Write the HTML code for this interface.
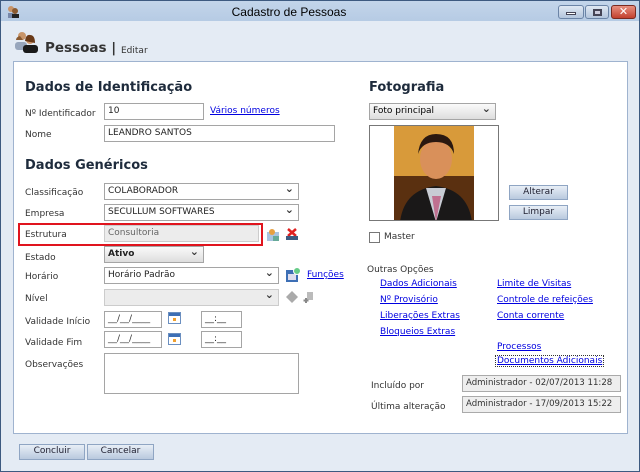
<!DOCTYPE html>
<html><head><meta charset="utf-8"><style>
*{box-sizing:border-box;margin:0;padding:0}
body{width:640px;height:472px;overflow:hidden;font-family:"DejaVu Sans","Liberation Sans",sans-serif;font-size:9px;color:#333;background:#6d8fb5;position:relative}
.win{position:absolute;left:0;top:0;width:640px;height:472px;background:linear-gradient(#c3d5ea,#b6cbe4 20px,#e4ebf4 20px);border:1px solid #3d5a80}
.a{position:absolute;white-space:nowrap}
.title{left:0;width:576px;top:4px;text-align:center;font-family:"Liberation Sans",sans-serif;font-size:12px;color:#000}
.panel{position:absolute;left:12px;top:60px;width:615px;height:373px;background:#fff;border:1px solid #9fb3cf}
h2{position:absolute;font-size:13px;font-weight:bold;color:#1e2b3c;white-space:nowrap}
.in{position:absolute;border:1px solid #a5a5a5;background:#fff;height:17px;padding:2px 3px;font-size:9px;color:#222;white-space:nowrap;overflow:hidden}
.sel:after{content:"⌄";position:absolute;right:4px;top:-2px;font-size:11px;font-weight:bold;color:#333}
a,.lk{color:#0000e0;text-decoration:underline;position:absolute;white-space:nowrap}
.btn{position:absolute;height:15px;border:1px solid #8fa5c3;background:linear-gradient(#e8eef6,#b9c9de);text-align:center;font-size:9px;line-height:13px;color:#223}
.cal{position:absolute;width:13px;height:12px;border:1px solid #6b8fc0;background:linear-gradient(#3d6fb5 3px,#fff 3px);}
.cal:after{content:"";position:absolute;left:4px;top:5px;width:3px;height:3px;background:#f0a030}
</style></head><body>
<div class="win">
<div class="a title">Cadastro de Pessoas</div>
<svg class="a" style="left:5px;top:4px" width="14" height="13"><circle cx="5" cy="4" r="3" fill="#c8956a"/><circle cx="9" cy="6" r="3" fill="#8a5a30"/><rect x="2" y="8" width="5" height="5" fill="#7788aa"/><rect x="6" y="9" width="7" height="4" fill="#222"/></svg>
<div class="a" style="left:557px;top:4px;width:26px;height:14px;border:1px solid #6b84a6;border-radius:3px;background:linear-gradient(#dfe8f3,#b3c5dc)"><div style="margin:6px auto 0;width:10px;height:3px;background:#fff;border:1px solid #445"></div></div>
<div class="a" style="left:584px;top:4px;width:24px;height:14px;border:1px solid #6b84a6;border-radius:3px;background:linear-gradient(#dfe8f3,#b3c5dc)"><div style="margin:3px auto 0;width:9px;height:7px;border:2px solid #445;background:#ccd"></div></div>
<div class="a" style="left:610px;top:4px;width:25px;height:14px;border:1px solid #7a2a20;border-radius:3px;background:linear-gradient(#e89080,#c2402e);color:#fff;font-weight:bold;text-align:center;font-size:11px;line-height:12px">✕</div>
<svg class="a" style="left:12px;top:30px" width="26" height="22"><circle cx="9" cy="5" r="4" fill="#c8956a"/><path d="M3 9 Q3 6 7 5 L10 9Z" fill="#8a5a30"/><rect x="2" y="11" width="12" height="8" rx="3" fill="#98a6bc"/><circle cx="17" cy="9" r="4" fill="#d09a70"/><path d="M12 10 Q13 3 17 4 Q22 4 22 12Z" fill="#6a3a18"/><rect x="10" y="14" width="15" height="8" rx="3" fill="#1a1a1a"/></svg>
<div class="a" style="left:44px;top:39px;font-size:13.5px;font-weight:bold;color:#333">Pessoas |</div>
<div class="a" style="left:120px;top:45px;font-size:9px;color:#333">Editar</div>
<div class="panel"></div>
<h2 style="left:24px;top:79px">Dados de Identificação</h2>
<div class="a" style="left:24px;top:108px">Nº Identificador</div>
<div class="in" style="left:103px;top:102px;width:100px">10</div>
<a style="left:209px;top:105px">Vários números</a>
<div class="a" style="left:24px;top:129px">Nome</div>
<div class="in" style="left:103px;top:124px;width:231px">LEANDRO SANTOS</div>
<h2 style="left:24px;top:157px">Dados Genéricos</h2>
<div class="a" style="left:24px;top:187px">Classificação</div>
<div class="in sel" style="left:103px;top:182px;width:195px">COLABORADOR</div>
<div class="a" style="left:24px;top:208px">Empresa</div>
<div class="in sel" style="left:103px;top:203px;width:195px">SECULLUM SOFTWARES</div>
<div class="a" style="left:17px;top:222px;width:245px;height:23px;border:2px solid #e0141e"></div>
<div class="a" style="left:24px;top:229px">Estrutura</div>
<div class="in" style="left:103px;top:224px;width:155px;background:#ececec;color:#666;border-color:#ccc">Consultoria</div>
<svg class="a" style="left:264px;top:226px" width="16" height="16"><rect x="2" y="5" width="12" height="9" fill="#a9c3e0"/><circle cx="7" cy="5" r="3" fill="#e8a040"/><rect x="8" y="9" width="6" height="5" fill="#6a9"/></svg>
<svg class="a" style="left:284px;top:226px" width="14" height="14"><path d="M3 2 L11 9 M11 2 L3 9" stroke="#e02020" stroke-width="2.5"/><rect x="1" y="9" width="12" height="4" fill="#3d5a80"/></svg>
<div class="a" style="left:24px;top:252px">Estado</div>
<div class="in sel" style="left:103px;top:245px;width:100px;background:linear-gradient(#fafafa,#ddd);font-weight:bold">Ativo</div>
<div class="a" style="left:24px;top:271px">Horário</div>
<div class="in sel" style="left:103px;top:266px;width:175px">Horário Padrão</div>
<svg class="a" style="left:284px;top:266px" width="16" height="16"><rect x="1" y="3" width="12" height="12" fill="#3d6fb5"/><rect x="3" y="7" width="8" height="6" fill="#dde"/><circle cx="12" cy="4" r="3.5" fill="#6c8" stroke="#fff"/></svg>
<a style="left:306px;top:269px">Funções</a>
<div class="a" style="left:24px;top:293px">Nível</div>
<div class="in sel" style="left:103px;top:288px;width:175px;background:#ececec;border-color:#ccc"></div>
<svg class="a" style="left:284px;top:289px" width="30" height="14"><path d="M7 1 L13 7 L7 13 L1 7Z" fill="#aaa"/><rect x="22" y="2" width="6" height="8" fill="#bbb"/><path d="M21 8 v5 M18.5 10.5 h5" stroke="#888" stroke-width="2"/></svg>
<div class="a" style="left:24px;top:316px">Validade Início</div>
<div class="in" style="left:103px;top:310px;width:58px;color:#333">__/__/____</div>
<div class="cal" style="left:167px;top:311px"></div>
<div class="in" style="left:200px;top:310px;width:41px">__:__</div>
<div class="a" style="left:24px;top:337px">Validade Fim</div>
<div class="in" style="left:103px;top:330px;width:58px;color:#333">__/__/____</div>
<div class="cal" style="left:167px;top:332px"></div>
<div class="in" style="left:200px;top:330px;width:41px">__:__</div>
<div class="a" style="left:24px;top:359px">Observações</div>
<div class="in" style="left:103px;top:352px;width:195px;height:41px"></div>
<h2 style="left:368px;top:79px">Fotografia</h2>
<div class="in sel" style="left:368px;top:102px;width:127px;background:linear-gradient(#fafafa,#ddd);color:#000">Foto principal</div>
<div class="a" style="left:368px;top:124px;width:130px;height:96px;border:1px solid #777;background:#fff;overflow:hidden">
<svg width="130" height="96" style="position:absolute;left:0;top:0"><rect x="24" y="0" width="80" height="96" fill="#d89a3a"/><rect x="24" y="50" width="80" height="46" fill="#5a3010"/><ellipse cx="66" cy="33" rx="16" ry="20" fill="#d9905a"/><path d="M48 28 Q50 8 66 8 Q84 8 84 28 Q80 16 66 16 Q52 16 48 28Z" fill="#2a1810"/><path d="M30 96 Q34 64 66 60 Q98 64 102 96Z" fill="#1a1818"/><path d="M56 62 L66 96 L76 62Z" fill="#c8ccd4"/><path d="M62 70 L66 96 L71 70Z" fill="#c07090"/></svg></div>
<div class="btn" style="left:508px;top:184px;width:59px">Alterar</div>
<div class="btn" style="left:508px;top:204px;width:59px">Limpar</div>
<div class="a" style="left:368px;top:231px;width:11px;height:11px;border:1px solid #777;background:#fff"></div>
<div class="a" style="left:383px;top:231px">Master</div>
<div class="a" style="left:366px;top:264px">Outras Opções</div>
<a style="left:379px;top:278px">Dados Adicionais</a>
<a style="left:379px;top:294px">Nº Provisório</a>
<a style="left:379px;top:310px">Liberações Extras</a>
<a style="left:379px;top:326px">Bloqueios Extras</a>
<a style="left:496px;top:278px">Limite de Visitas</a>
<a style="left:496px;top:294px">Controle de refeições</a>
<a style="left:496px;top:310px">Conta corrente</a>
<a style="left:496px;top:341px">Processos</a>
<a style="left:494px;top:354px;border:1px dotted #333;padding:0 1px">Documentos Adicionais</a>
<div class="a" style="left:370px;top:380px">Incluído por</div>
<div class="in" style="left:461px;top:374px;width:159px;background:#eee;color:#333;border-color:#aaa;font-size:8.6px">Administrador - 02/07/2013 11:28</div>
<div class="a" style="left:370px;top:401px">Última alteração</div>
<div class="in" style="left:461px;top:395px;width:159px;background:#eee;color:#333;border-color:#aaa;font-size:8.6px">Administrador - 17/09/2013 15:22</div>
<div class="btn" style="left:18px;top:443px;width:66px;height:16px">Concluir</div>
<div class="btn" style="left:86px;top:443px;width:67px;height:16px">Cancelar</div>
</div>
</body></html>
